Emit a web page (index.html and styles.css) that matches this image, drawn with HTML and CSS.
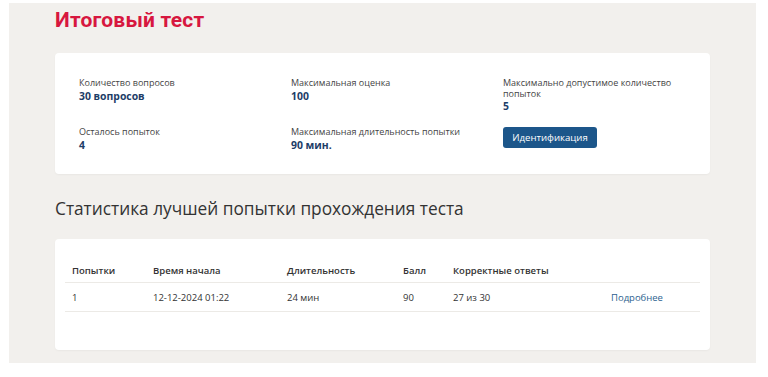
FILE: index.html
```html
<!DOCTYPE html>
<html lang="ru">
<head>
    <meta charset="UTF-8">
    <meta name="viewport" content="width=device-width, initial-scale=1.0">
    <title>Итоговый тест</title>
    <link rel="stylesheet" href="styles.css">
</head>
<body>
    <div class="page">
        <h1 class="page-title">Итоговый тест</h1>

        <div class="card info-card">
            <div class="info-grid">
                <div class="info-item">
                    <div class="info-label">Количество вопросов</div>
                    <div class="info-value">30 вопросов</div>
                </div>
                <div class="info-item">
                    <div class="info-label">Максимальная оценка</div>
                    <div class="info-value">100</div>
                </div>
                <div class="info-item">
                    <div class="info-label">Максимально допустимое количество попыток</div>
                    <div class="info-value">5</div>
                </div>
                <div class="info-item">
                    <div class="info-label">Осталось попыток</div>
                    <div class="info-value">4</div>
                </div>
                <div class="info-item">
                    <div class="info-label">Максимальная длительность попытки</div>
                    <div class="info-value">90 мин.</div>
                </div>
                <div class="info-item">
                    <button class="btn-primary">Идентификация</button>
                </div>
            </div>
        </div>

        <h2 class="section-title">Статистика лучшей попытки прохождения теста</h2>

        <div class="card table-card">
            <table class="stats-table">
                <thead>
                    <tr>
                        <th class="col-try">Попытки</th>
                        <th class="col-start">Время начала</th>
                        <th class="col-dur">Длительность</th>
                        <th class="col-score">Балл</th>
                        <th class="col-correct">Корректные ответы</th>
                        <th></th>
                    </tr>
                </thead>
                <tbody>
                    <tr>
                        <td>1</td>
                        <td>12-12-2024 01:22</td>
                        <td>24 мин</td>
                        <td>90</td>
                        <td>27 из 30</td>
                        <td><a href="#" class="more-link">Подробнее</a></td>
                    </tr>
                </tbody>
            </table>
        </div>
    </div>
</body>
</html>
```

FILE: styles.css
```css
* { margin: 0; padding: 0; box-sizing: border-box; }
body {
    font-family: 'Open Sans', 'Noto Sans', sans-serif;
    background: #fff;
    color: #333;
    padding: 3px 12px 0 9px;
}
.page {
    background: #f2f0ed;
    padding: 0 46px 13px 46px;
    height: 360px;
}
.page-title {
    font-family: Roboto, 'Open Sans', sans-serif;
    color: #d7173f;
    font-size: 21px;
    font-weight: 700;
    line-height: 24px;
    padding-top: 5px;
    letter-spacing: 0.2px;
}
.card {
    background: #fff;
    border-radius: 4px;
    box-shadow: 0 1px 2px rgba(0,0,0,0.04);
}
.info-card {
    margin-top: 21px;
    padding: 25px 24px 24px 24px;
    height: 121px;
}
.info-grid {
    display: grid;
    grid-template-columns: 212px 212px 180px;
    row-gap: 14px;
}
.info-label {
    font-size: 9px;
    line-height: 10.5px;
    color: #444;
}
.info-value {
    font-size: 10.4px;
    line-height: 13px;
    margin-top: 1px;
    font-weight: 700;
    color: #1d3d67;
}
.btn-primary {
    display: block;
    font-family: inherit;
    background: #1c568a;
    color: #fff;
    border: none;
    border-radius: 3px;
    font-size: 9.6px;
    height: 21px;
    width: 94px;
}
.section-title {
    font-size: 17.3px;
    font-weight: 400;
    color: #333;
    line-height: 26px;
    margin-top: 22px;
}
.table-card {
    margin-top: 17px;
    padding: 22px 10px 38px 10px;
    height: 111px;
}
.stats-table {
    width: 100%;
    border-collapse: collapse;
    font-size: 9.5px;
    color: #333;
}
.stats-table th {
    text-align: left;
    font-weight: 600;
    padding: 3px 7px 5px;
    border-bottom: 1px solid #eceae6;
}
.stats-table td {
    padding: 8px 7px 7px;
    border-bottom: 1px solid #eceae6;
}
.col-try { width: 81px; }
.col-start { width: 134px; }
.col-dur { width: 116px; }
.col-score { width: 50px; }
.col-correct { width: 158px; }
.more-link {
    color: #2d5f8f;
    text-decoration: none;
}
```
